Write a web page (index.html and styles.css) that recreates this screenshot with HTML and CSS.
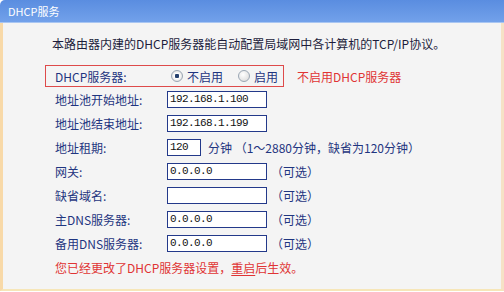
FILE: index.html
```html
<!DOCTYPE html>
<html lang="zh-CN">
<head>
  <meta charset="UTF-8">
  <title>DHCP服务</title>
  <link rel="stylesheet" href="styles.css">
</head>
<body>
  <div class="panel-head">DHCP服务</div>
  <div class="panel-body">
    <p class="intro">本路由器内建的DHCP服务器能自动配置局域网中各计算机的TCP/IP协议。</p>

    <div class="switch-row">
      <div class="dhcp-box">
        <span class="label">DHCP服务器:</span>
        <label class="opt"><input type="radio" name="dhcp" checked>不启用</label>
        <label class="opt"><input type="radio" name="dhcp">启用</label>
      </div>
      <span class="hint">不启用DHCP服务器</span>
    </div>

    <div class="row">
      <span class="label">地址池开始地址:</span>
      <input class="field" type="text" value="192.168.1.100">
    </div>
    <div class="row">
      <span class="label">地址池结束地址:</span>
      <input class="field" type="text" value="192.168.1.199">
    </div>
    <div class="row">
      <span class="label">地址租期:</span>
      <input class="field short" type="text" value="120">
      <span class="unit">分钟 （1～2880分钟，缺省为120分钟）</span>
    </div>
    <div class="row">
      <span class="label">网关:</span>
      <input class="field" type="text" value="0.0.0.0">
      <span class="extra">（可选）</span>
    </div>
    <div class="row">
      <span class="label">缺省域名:</span>
      <input class="field" type="text" value="">
      <span class="extra">（可选）</span>
    </div>
    <div class="row">
      <span class="label">主DNS服务器:</span>
      <input class="field" type="text" value="0.0.0.0">
      <span class="extra">（可选）</span>
    </div>
    <div class="row">
      <span class="label">备用DNS服务器:</span>
      <input class="field" type="text" value="0.0.0.0">
      <span class="extra">（可选）</span>
    </div>

    <div class="row note">您已经更改了DHCP服务器设置，<u>重启</u>后生效。</div>
  </div>
</body>
</html>
```

FILE: styles.css
```css
body {
  margin: 0;
  width: 504px;
  background-color: #fff;
  font-family: "Noto Sans CJK SC", "Noto Sans", sans-serif;
  font-size: 12px;
}
.panel-head {
  height: 22px;
  line-height: 22px;
  padding-left: 8px;
  color: #fff;
  font-size: 11px;
  border-radius: 5px 0 0 0;
  background: linear-gradient(#5a8de0, #72a1ea);
  border-bottom: 1px solid #a9c6f2;
}
.panel-body {
  box-sizing: border-box;
  height: 268px;
  padding: 13px 0 0 42px;
  background-color: #f4f4f4;
  border-left: 3px solid #f8d9a8;
  border-right: 3px solid #f6e2c6;
  border-bottom: 2px solid #f6e6b8;
}
.intro {
  margin: 0 0 13px 7px;
  line-height: 16px;
  color: #1d1d3c;
}
/* DHCP on/off */
.switch-row {
  display: flex;
  align-items: center;
  white-space: nowrap;
}
.dhcp-box {
  display: flex;
  align-items: center;
  flex-shrink: 0;
  box-sizing: border-box;
  width: 239px;
  height: 22px;
  padding-left: 9px;
  border: 1px solid #de4a4a;
}
.dhcp-box .label {
  flex-shrink: 0;
  width: 112px;
}
.opt {
  display: flex;
  align-items: center;
  flex-shrink: 0;
  margin-right: 11px;
  color: #1f3580;
}
.opt input {
  appearance: none;
  flex-shrink: 0;
  width: 12px;
  height: 12px;
  margin: 0 4px;
  border: 1px solid #9aa6b4;
  border-radius: 50%;
  background: radial-gradient(circle at 40% 35%, #fff, #d6d6d6);
}
.opt input:checked {
  background: radial-gradient(circle, #25406e 0, #25406e 2px, #fff 2.5px, #dcdcdc 6px);
}
.hint {
  margin-left: 13px;
  color: #e03434;
}
/* form rows */
.row {
  display: flex;
  align-items: center;
  height: 24px;
  padding-left: 10px;
  color: #1f3580;
  white-space: nowrap;
}
.label {
  flex-shrink: 0;
  width: 112px;
  color: #1f3580;
}
.field {
  box-sizing: border-box;
  flex-shrink: 0;
  width: 100px;
  height: 17px;
  padding: 0 2px;
  margin: 0;
  border: 1px solid #23398a;
  background-color: #fff;
  font-family: "Liberation Mono", monospace;
  font-size: 11px;
  letter-spacing: -0.6px;
  color: #111;
}
.field.short {
  width: 34px;
}
.unit {
  margin-left: 7px;
}
.extra {
  margin-left: 4px;
}
.note {
  color: #e03434;
}
.note u {
  text-underline-offset: 2px;
}
```
